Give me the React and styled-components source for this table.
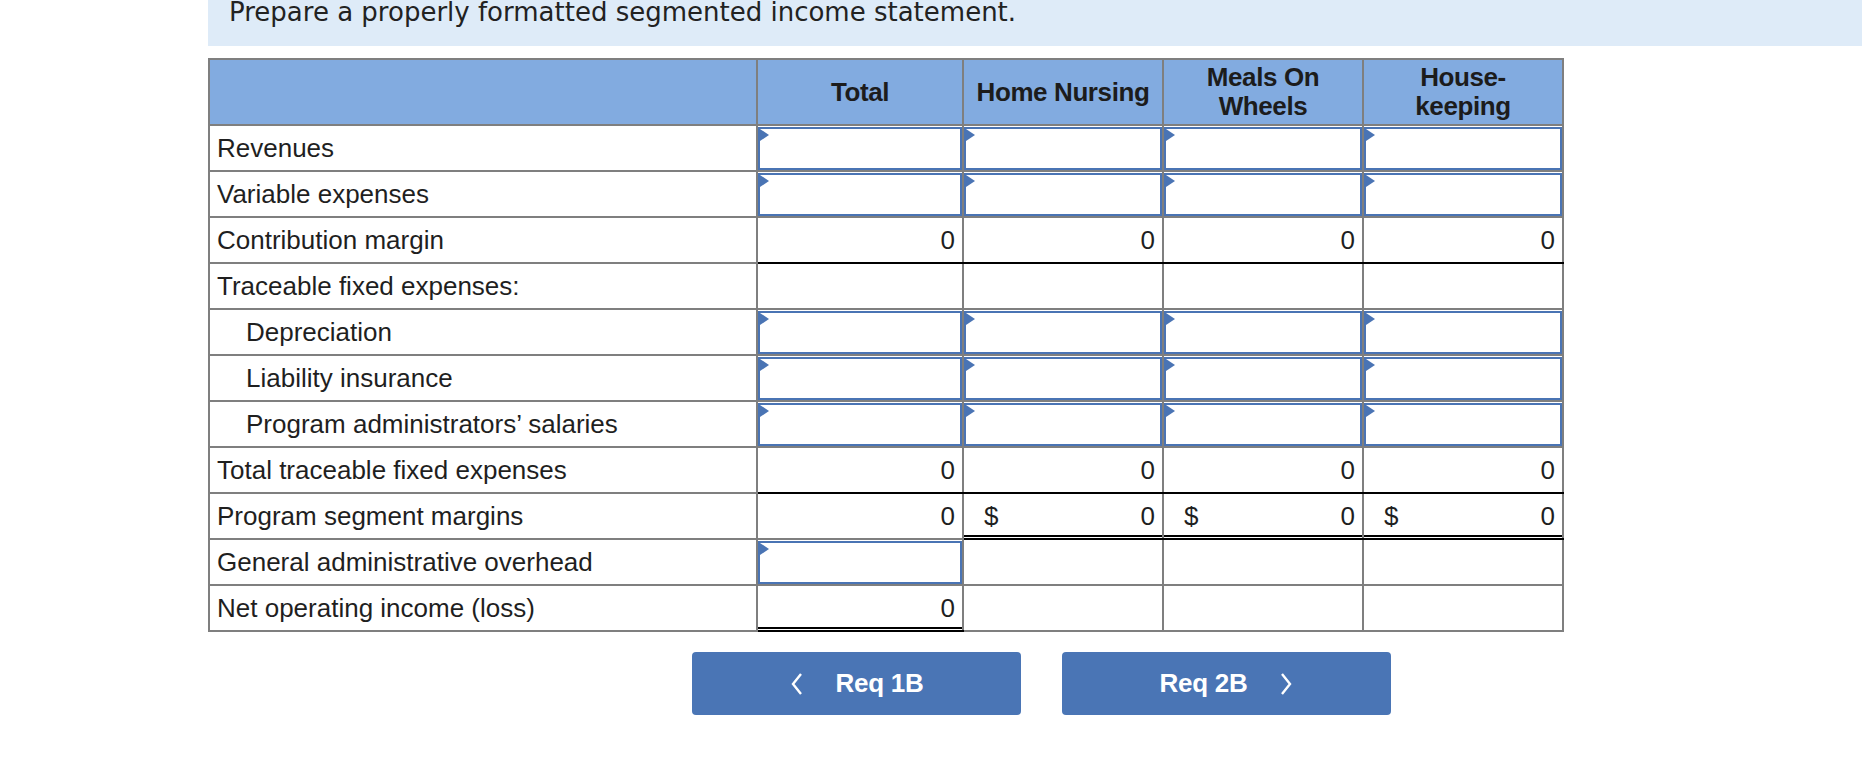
import React from 'react';
import styled, { createGlobalStyle } from 'styled-components';

const GlobalStyle = createGlobalStyle`
  body {
    margin: 0;
    background: #ffffff;
    font-family: "Liberation Sans", Arial, sans-serif;
    color: #1f1f1f;
  }
`;

const Page = styled.div`
  padding-left: 208px;
`;

const Banner = styled.div`
  height: 46px;
  background-color: #deebf8;
  padding-left: 21px;
  font-family: "DejaVu Sans", Verdana, sans-serif;
  font-size: 26px;
  line-height: 24px;
  color: #222;
  box-sizing: border-box;
`;

const Sheet = styled.table`
  margin-top: 12px;
  border-collapse: collapse;
  table-layout: fixed;
  width: 1354px;
  border: 2px solid #7f7f7f;
  font-size: 26px;
`;

const HeadCell = styled.th`
  height: 64px;
  padding: 0;
  background-color: #82abe0;
  border: 2px solid #7f7f7f;
  font-weight: bold;
  font-size: 26px;
  line-height: 29px;
  text-align: center;
  color: #1c1c1c;
  letter-spacing: -0.4px;
`;

const LabelCell = styled.td`
  height: 44px;
  padding: 0 0 0 ${p => (p.$indent ? 36 : 7)}px;
  border: 2px solid #7f7f7f;
  white-space: nowrap;
  color: #1f1f1f;
`;

const ValueCell = styled.td`
  position: relative;
  height: 44px;
  padding: ${p => (p.$input ? '0' : '0 7px 0 0')};
  border: 2px solid #7f7f7f;
  border-top: 2px solid ${p => (p.$top ? '#000' : '#7f7f7f')};
  border-bottom: 2px solid ${p => (p.$bottom || p.$double ? '#000' : '#7f7f7f')};
  text-align: right;
  vertical-align: middle;

  &::after {
    content: '';
    display: ${p => (p.$double ? 'block' : 'none')};
    position: absolute;
    left: 0;
    right: 0;
    bottom: 1px;
    height: 2px;
    background: #000;
  }
`;

const Money = styled.div`
  display: flex;
  justify-content: space-between;
  padding-left: 20px;
`;

const InputBox = styled.div`
  position: relative;
  height: 43px;
  border: 2px solid #4a74b4;
  box-sizing: border-box;
  background: #fff;

  &::before {
    content: '';
    position: absolute;
    top: 0;
    left: 0;
    border-top: 6.5px solid transparent;
    border-bottom: 6.5px solid transparent;
    border-left: 9px solid #4a74b4;
  }
`;

const Nav = styled.div`
  display: flex;
  gap: 41px;
  margin-top: 20px;
  padding-left: 484px;
`;

const NavButton = styled.button`
  display: flex;
  align-items: center;
  justify-content: center;
  gap: 32px;
  width: 329px;
  height: 63px;
  border: none;
  border-radius: 4px;
  background-color: #4a75b5;
  color: #fff;
  font-family: "Liberation Sans", Arial, sans-serif;
  font-weight: bold;
  font-size: 26px;
  letter-spacing: -0.3px;
  cursor: pointer;
`;

const Chevron = ({ dir }) => (
  <svg width="14" height="24" viewBox="0 0 14 24" fill="none">
    <polyline
      points={dir === 'left' ? '11,2 3,12 11,22' : '3,2 11,12 3,22'}
      stroke="#fff"
      strokeWidth="2.4"
      strokeLinejoin="miter"
    />
  </svg>
);

const inputs = ['input', 'input', 'input', 'input'];
const empties = [{}, {}, {}, {}];

const rows = [
  { label: 'Revenues', cells: inputs },
  { label: 'Variable expenses', cells: inputs },
  {
    label: 'Contribution margin',
    cells: [0, 1, 2, 3].map(() => ({ value: '0', top: true, bottom: true })),
  },
  { label: 'Traceable fixed expenses:', cells: empties },
  { label: 'Depreciation', indent: true, cells: inputs },
  { label: 'Liability insurance', indent: true, cells: inputs },
  { label: 'Program administrators’ salaries', indent: true, cells: inputs },
  {
    label: 'Total traceable fixed expenses',
    cells: [0, 1, 2, 3].map(() => ({ value: '0', top: true, bottom: true })),
  },
  {
    label: 'Program segment margins',
    cells: [
      { value: '0', top: true },
      { value: '0', top: true, dollar: true, double: true },
      { value: '0', top: true, dollar: true, double: true },
      { value: '0', top: true, dollar: true, double: true },
    ],
  },
  { label: 'General administrative overhead', cells: ['input', {}, {}, {}] },
  {
    label: 'Net operating income (loss)',
    cells: [{ value: '0', top: true, double: true }, {}, {}, {}],
  },
];

const App = () => {
  return (
    <Page>
      <GlobalStyle />
      <Banner>Prepare a properly formatted segmented income statement.</Banner>
      <Sheet>
        <colgroup>
          <col style={{ width: 548 }} />
          <col style={{ width: 206 }} />
          <col style={{ width: 200 }} />
          <col style={{ width: 200 }} />
          <col style={{ width: 200 }} />
        </colgroup>
        <thead>
          <tr>
            <HeadCell />
            <HeadCell>Total</HeadCell>
            <HeadCell>Home Nursing</HeadCell>
            <HeadCell>Meals On<br />Wheels</HeadCell>
            <HeadCell>House-<br />keeping</HeadCell>
          </tr>
        </thead>
        <tbody>
          {rows.map((row, index) => (
            <tr key={index}>
              <LabelCell $indent={row.indent}>{row.label}</LabelCell>
              {row.cells.map((cell, i) =>
                cell === 'input' ? (
                  <ValueCell key={i} $input>
                    <InputBox />
                  </ValueCell>
                ) : (
                  <ValueCell key={i} $top={cell.top} $bottom={cell.bottom} $double={cell.double}>
                    {cell.dollar ? (
                      <Money>
                        <span>$</span>
                        <span>{cell.value}</span>
                      </Money>
                    ) : (
                      cell.value
                    )}
                  </ValueCell>
                )
              )}
            </tr>
          ))}
        </tbody>
      </Sheet>
      <Nav>
        <NavButton>
          <Chevron dir="left" />
          <span>Req 1B</span>
        </NavButton>
        <NavButton>
          <span>Req 2B</span>
          <Chevron dir="right" />
        </NavButton>
      </Nav>
    </Page>
  );
};

export default App;
